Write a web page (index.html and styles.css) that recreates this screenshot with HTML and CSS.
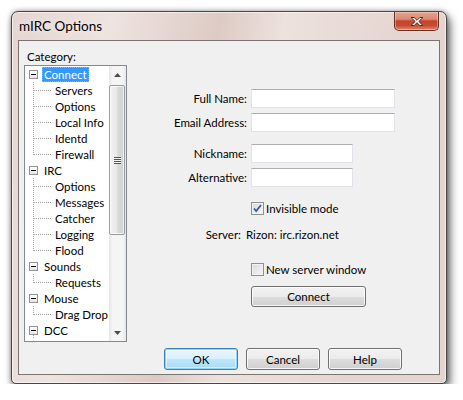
FILE: index.html
```html
<!DOCTYPE html>
<html>
<head>
<meta charset="utf-8">
<link rel="stylesheet" href="styles.css">
</head>
<body>
<div class="window">
  <div class="titlebar">
    <span class="title">mIRC Options</span>
    <div class="close">
      <svg width="16" height="11" viewBox="0 0 16 11"><path d="M2 1.5h3.2L8 4.3l2.8-2.8H14L9.8 5.5 14 9.5h-3.2L8 6.7 5.2 9.5H2l4.2-4z" fill="#fff" stroke="#5a2a22" stroke-width="1" stroke-linejoin="round"/></svg>
    </div>
  </div>
  <div class="client">
    <div class="main">
      <div class="left">
        <div class="cat-label">Category:</div>
        <div class="tree">
          <div class="tree-list">
            <div class="node"><span class="exp"></span><span class="lbl sel">Connect</span></div>
            <div class="child"><span class="lbl">Servers</span></div>
            <div class="child"><span class="lbl">Options</span></div>
            <div class="child"><span class="lbl">Local Info</span></div>
            <div class="child"><span class="lbl">Identd</span></div>
            <div class="child last"><span class="lbl">Firewall</span></div>
            <div class="node"><span class="exp"></span><span class="lbl">IRC</span></div>
            <div class="child"><span class="lbl">Options</span></div>
            <div class="child"><span class="lbl">Messages</span></div>
            <div class="child"><span class="lbl">Catcher</span></div>
            <div class="child"><span class="lbl">Logging</span></div>
            <div class="child last"><span class="lbl">Flood</span></div>
            <div class="node"><span class="exp"></span><span class="lbl">Sounds</span></div>
            <div class="child last"><span class="lbl">Requests</span></div>
            <div class="node"><span class="exp"></span><span class="lbl">Mouse</span></div>
            <div class="child last"><span class="lbl">Drag Drop</span></div>
            <div class="node more"><span class="exp"></span><span class="lbl">DCC</span></div>
          </div>
          <div class="scrollbar">
            <div class="arrow"><svg width="7" height="4" viewBox="0 0 7 4"><path d="M0 4L3.5 0 7 4z" fill="#4d4d4d"/></svg></div>
            <div class="track">
              <div class="thumb"><span class="grip"></span></div>
            </div>
            <div class="arrow"><svg width="7" height="4" viewBox="0 0 7 4"><path d="M0 0L3.5 4 7 0z" fill="#4d4d4d"/></svg></div>
          </div>
        </div>
      </div>
      <div class="form">
        <div class="row"><label>Full Name:</label><span class="input wide"></span></div>
        <div class="row r2"><label>Email Address:</label><span class="input wide"></span></div>
        <div class="row r3"><label>Nickname:</label><span class="input narrow"></span></div>
        <div class="row r2"><label>Alternative:</label><span class="input narrow"></span></div>
        <div class="row check-row r5"><span class="spacer"></span><span class="checkbox checked"><svg width="9" height="9" viewBox="0 0 9 9"><path d="M1 4.5l2.2 2.5L8 1" fill="none" stroke="#3d5a9a" stroke-width="1.8"/></svg></span><span class="ctext">Invisible mode</span></div>
        <div class="row server-row"><label class="slabel">Server:</label><span class="sval">Rizon: irc.rizon.net</span></div>
        <div class="row check-row r7"><span class="spacer"></span><span class="checkbox"></span><span class="ctext">New server window</span></div>
        <div class="row r8"><span class="spacer"></span><button class="btn connect">Connect</button></div>
      </div>
    </div>
    <div class="buttons">
      <button class="btn default">OK</button>
      <button class="btn">Cancel</button>
      <button class="btn">Help</button>
    </div>
  </div>
</div>
</body>
</html>
```

FILE: styles.css
```css
html, body {
  margin: 0;
  padding: 0;
  background: #ffffff;
}
body {
  font-family: "Lato", "Open Sans", sans-serif;
  font-size: 11.5px;
  color: #000;
}
.window {
  margin: 11px 0 0 11px;
  width: 436px;
  height: 373px;
  box-sizing: border-box;
  border: 1px solid #474747;
  border-radius: 7px 7px 5px 5px;
  padding: 0 6px 8px 6px;
  display: flex;
  flex-direction: column;
  background:
    linear-gradient(100deg, rgba(255,255,255,0) 0%, rgba(255,255,255,0.35) 20%, rgba(200,170,160,0.25) 42%, rgba(255,255,255,0.3) 55%, rgba(255,255,255,0) 80%),
    #e5d5d0;
  box-shadow: 3px 5px 10px rgba(0,0,0,0.6), 0 0 5px rgba(0,0,0,0.35), inset 0 0 0 1px rgba(255,255,255,0.6);
}
.titlebar {
  height: 28px;
  display: flex;
  align-items: flex-start;
}
.title {
  padding-left: 1px;
  margin-top: 6px;
  font-size: 13.5px;
  color: #000;
  text-shadow: 0 0 6px rgba(255,255,255,0.9);
}
.close {
  margin-left: auto;
  margin-right: 1px;
  width: 45px;
  height: 19px;
  box-sizing: border-box;
  border: 1px solid #6b2f24;
  border-top: none;
  border-radius: 0 0 5px 5px;
  background: linear-gradient(to bottom, #e8a18e 0%, #d98a75 40%, #c3432b 50%, #c94b31 75%, #e28a6e 100%);
  display: flex;
  align-items: center;
  justify-content: center;
  box-shadow: inset 0 0 0 1px rgba(255,255,255,0.35);
}
.client {
  flex: 1;
  border: 1px solid #7c7470;
  background: #f0f0f0;
  padding: 8px 0 0 5px;
  display: flex;
  flex-direction: column;
}
.main {
  display: flex;
  align-items: flex-start;
}
.left {
  width: 103px;
}
.cat-label {
  height: 16px;
  line-height: 16px;
  padding-left: 3px;
}
.tree {
  height: 277px;
  box-sizing: border-box;
  border: 1px solid #828790;
  background: #fff;
  display: flex;
}
.tree-list {
  flex: 1;
  overflow: hidden;
  padding-left: 4px;
}
.node, .child {
  height: 16px;
  display: flex;
  align-items: center;
  white-space: nowrap;
}
.exp {
  width: 9px;
  height: 9px;
  box-sizing: border-box;
  border: 1px solid #919191;
  background: linear-gradient(#ffffff, #e6e6e6) ;
  position: relative;
  flex: none;
  margin-right: 4px;
}
.exp::after {
  content: "";
  position: absolute;
  left: 1px;
  top: 3px;
  width: 5px;
  height: 1px;
  background: #000;
}
.node.more {
  background: repeating-linear-gradient(to bottom, #a0a0a0 0 1px, transparent 1px 2px) 4px 13px / 1px 3px no-repeat;
}
.child {
  padding-left: 24px;
  background:
    repeating-linear-gradient(to bottom, #a0a0a0 0 1px, transparent 1px 2px) 4px 0 / 1px 100% no-repeat,
    repeating-linear-gradient(to right, #a0a0a0 0 1px, transparent 1px 2px) 5px 8px / 18px 1px no-repeat;
}
.child.last {
  background:
    repeating-linear-gradient(to bottom, #a0a0a0 0 1px, transparent 1px 2px) 4px 0 / 1px 9px no-repeat,
    repeating-linear-gradient(to right, #a0a0a0 0 1px, transparent 1px 2px) 5px 8px / 18px 1px no-repeat;
}
.lbl {
  padding: 0 2px;
  height: 15px;
  line-height: 15px;
  box-sizing: border-box;
}
.lbl.sel {
  background: #3399ff;
  color: #fff;
  outline: 1px dotted #e8a040;
  outline-offset: -1px;
}
.scrollbar {
  width: 17px;
  flex: none;
  display: flex;
  flex-direction: column;
  background: linear-gradient(to right, #e6e6e6, #f5f5f5 20%, #f5f5f5 80%, #e6e6e6);
}
.arrow {
  height: 17px;
  display: flex;
  align-items: center;
  justify-content: center;
}
.track {
  flex: 1;
  padding: 2px 0 0 0;
}
.thumb {
  height: 150px;
  margin: 0 1px 0 0;
  box-sizing: border-box;
  border: 1px solid #9b9b9b;
  border-radius: 2px;
  background: linear-gradient(to right, #f2f2f2, #e8e8e8 50%, #d9d9d9 55%, #d3d3d3);
  display: flex;
  align-items: center;
  justify-content: center;
  box-shadow: inset 0 0 0 1px rgba(255,255,255,0.7);
}
.grip {
  width: 7px;
  height: 7px;
  background: repeating-linear-gradient(to bottom, #555 0 1px, #f4f4f4 1px 2px);
}
.form {
  flex: 1;
  padding-top: 40px;
  display: flex;
  flex-direction: column;
}
.row {
  display: flex;
  align-items: center;
  gap: 4px;
}
.row label {
  width: 120px;
  text-align: right;
}
.r2 { margin-top: 5px; }
.r3 { margin-top: 12px; }
.r5 { margin-top: 15px; }
.r7 { margin-top: 21px; }
.r8 { margin-top: 10px; }
.input {
  height: 19px;
  box-sizing: border-box;
  border: 1px solid #e2e3ea;
  border-top-color: #abadb3;
  background: #fff;
}
.input.wide { width: 144px; }
.input.narrow { width: 102px; }
.spacer { width: 120px; flex: none; }
.check-row { gap: 4px; height: 13px; }
.checkbox {
  width: 13px;
  height: 13px;
  box-sizing: border-box;
  border: 1px solid #8e8f8f;
  background: linear-gradient(135deg, #d8d9da, #f6f6f6);
  box-shadow: inset 0 0 0 1px #f2f2f2;
  display: flex;
  align-items: center;
  justify-content: center;
  flex: none;
  margin-right: -2px;
}
.server-row {
  margin-top: 11px;
  height: 16px;
  gap: 5px;
}
.row .slabel { width: 114px; }
.btn {
  font-family: inherit;
  font-size: 11.5px;
  color: #000;
  height: 21px;
  padding: 0;
  box-sizing: border-box;
  border: 1px solid #707070;
  border-radius: 3px;
  background: linear-gradient(to bottom, #f2f2f2 0%, #ebebeb 50%, #dddddd 51%, #cfcfcf 100%);
  box-shadow: inset 0 0 0 1px rgba(255,255,255,0.8);
}
.btn.connect { width: 115px; }
.buttons {
  margin-top: 6px;
  padding-left: 140px;
  display: flex;
  gap: 8px;
}
.buttons .btn {
  width: 74px;
  height: 22px;
}
.btn.default {
  border-color: #3c7fb1;
  box-shadow: inset 0 0 0 1px #98d1ef, inset 0 0 0 2px rgba(255,255,255,0.5);
  background: linear-gradient(to bottom, #eaf6fd 0%, #d9f0fc 50%, #bee6fd 51%, #a7d9f5 100%);
}
```
